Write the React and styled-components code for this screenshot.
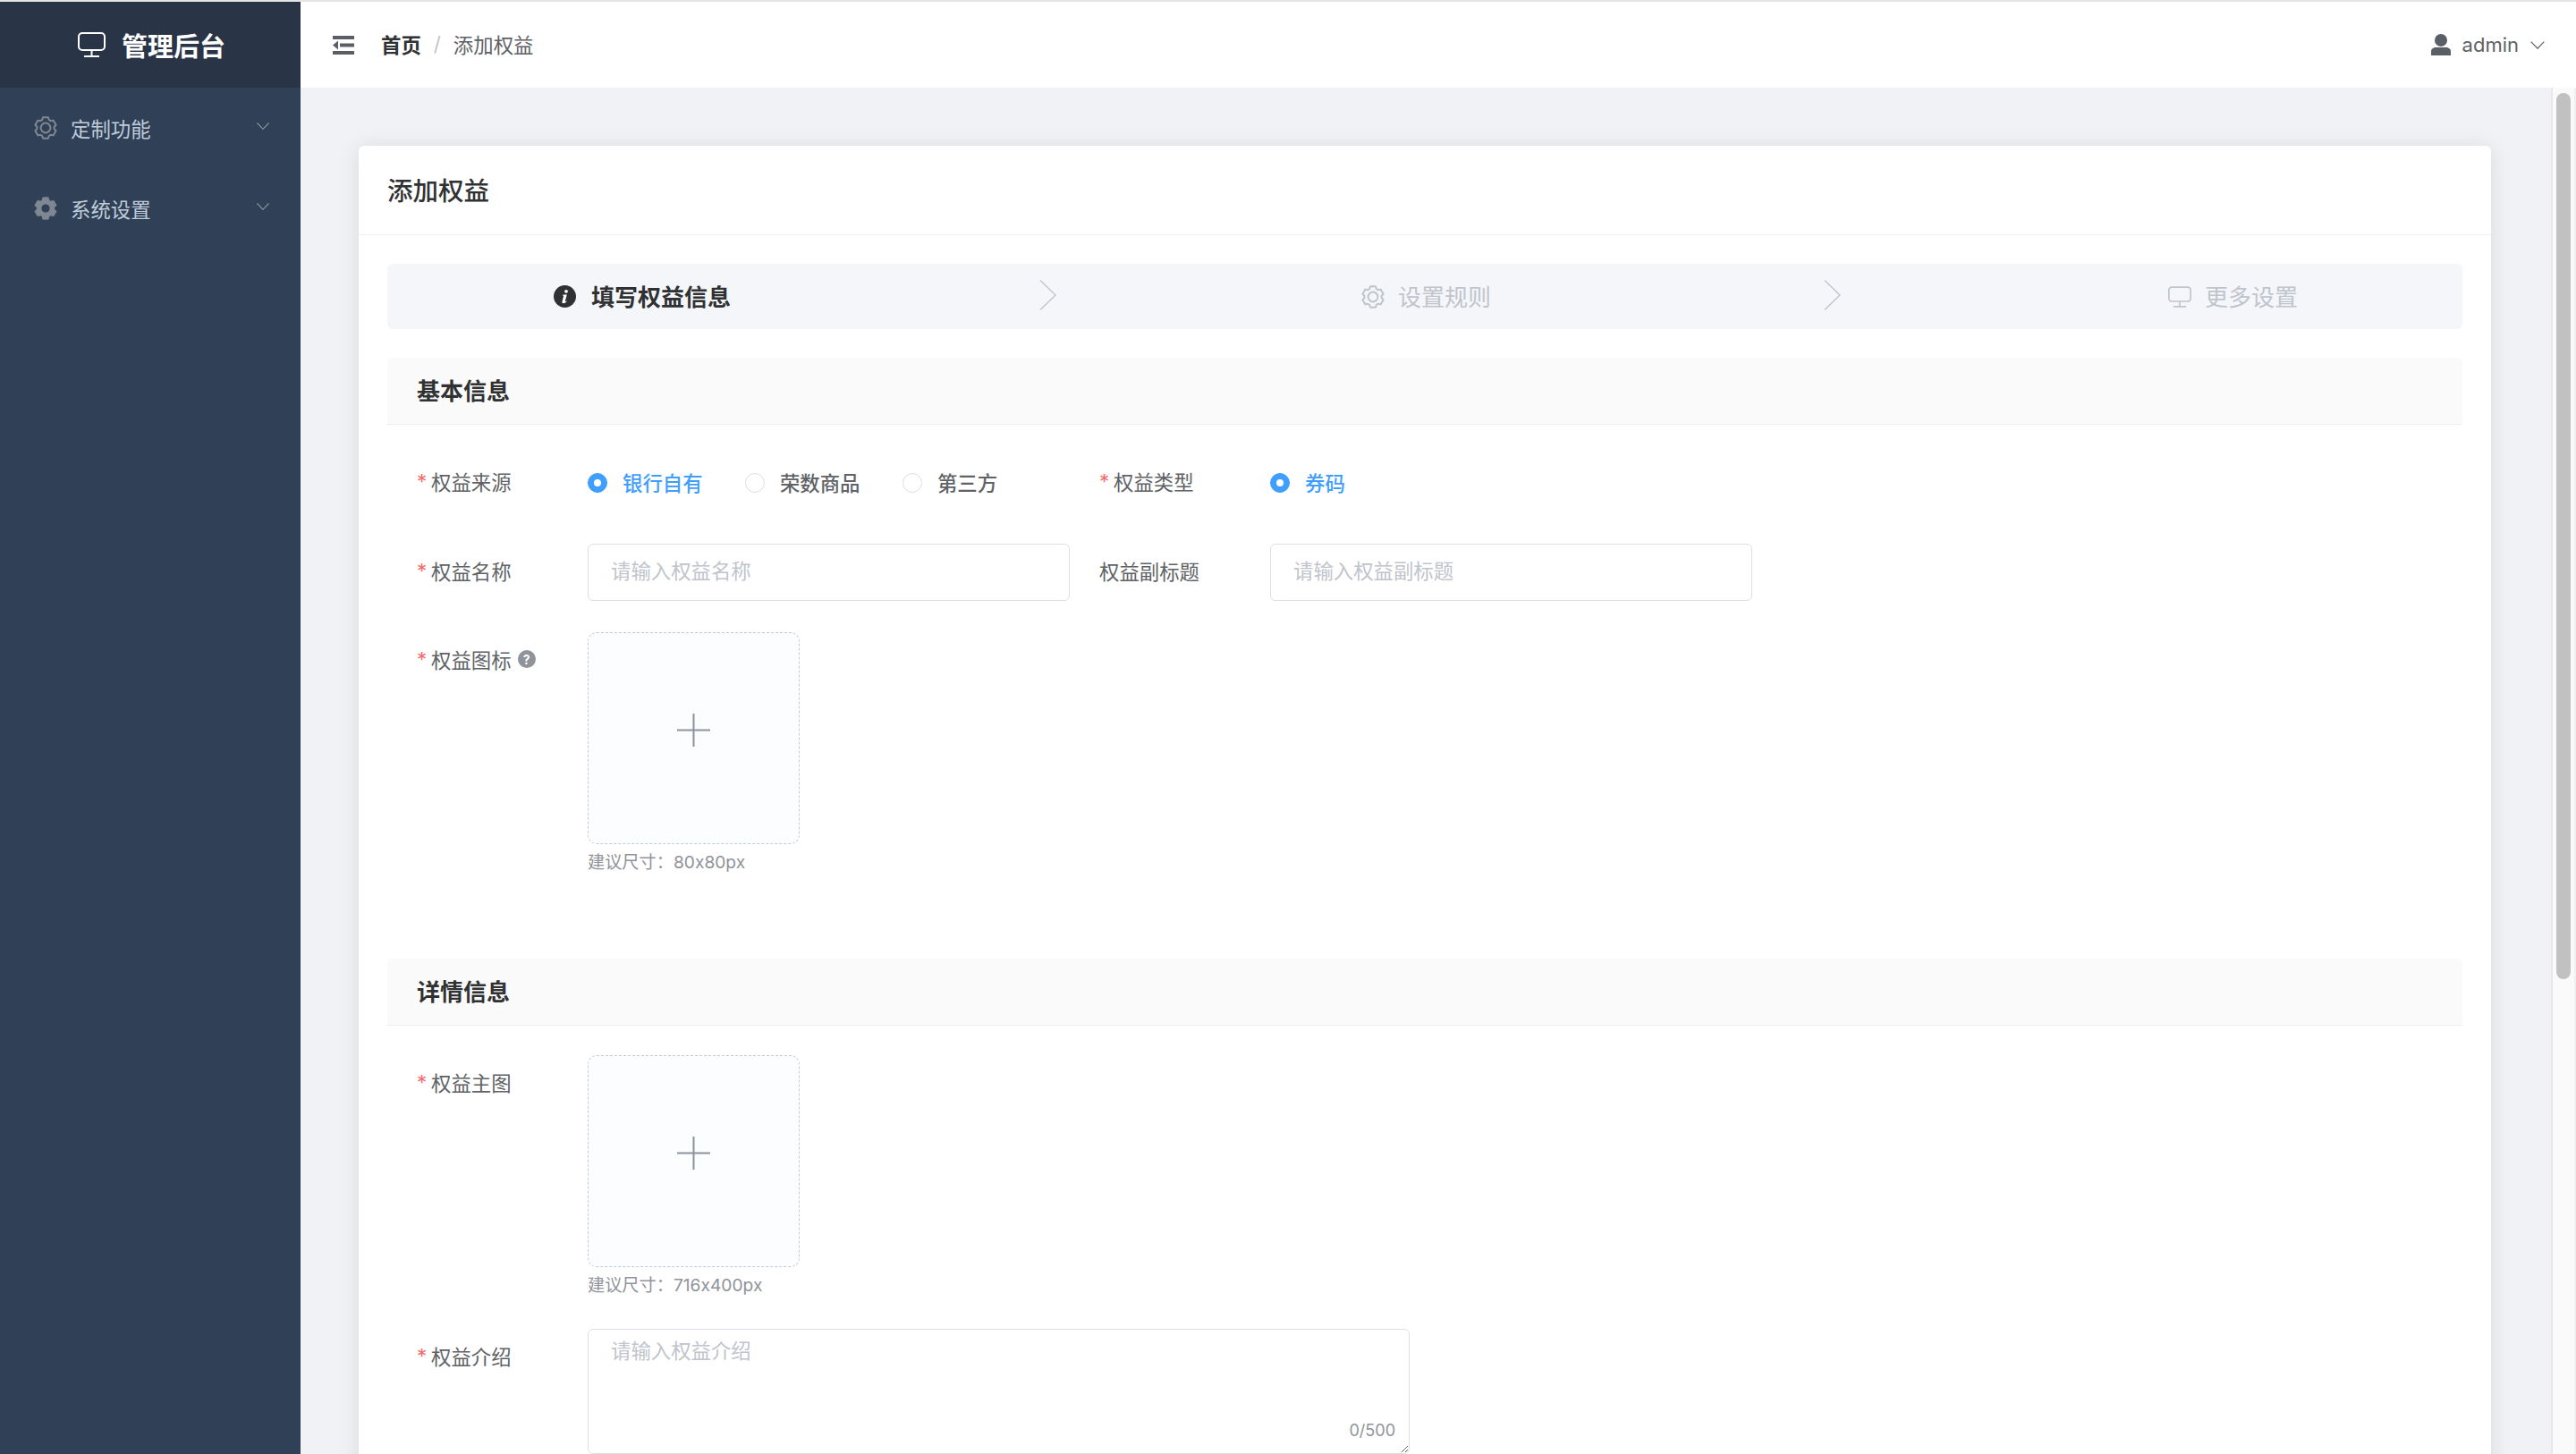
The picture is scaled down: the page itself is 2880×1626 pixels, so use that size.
import React from "react";
import styled, { createGlobalStyle } from "styled-components";

const GlobalStyle = createGlobalStyle`
  html, body {
    margin: 0;
    height: 100%;
    overflow: hidden;
    background: #fff;
  }
  * {
    box-sizing: border-box;
  }
  body, input, textarea {
    font-family: "Inter", "Noto Sans CJK SC", sans-serif;
  }
`;

const Shell = styled.div`
  display: grid;
  grid-template-columns: 336px 1fr;
  height: 1626px;
  border-top: 2px solid #e4e4e4;
`;

const Sidebar = styled.aside`
  background: #304157;
`;
const Logo = styled.div`
  display: flex;
  align-items: center;
  height: 96px;
  padding-left: 87px;
  gap: 18px;
  background: #293547;
  color: #fff;
  font-size: 29px;
  font-weight: 700;
`;
const MenuItem = styled.div`
  display: flex;
  align-items: center;
  height: 90px;
  padding: 0 35px 0 38px;
  gap: 15px;
  color: #bfcbd9;
  font-size: 22.4px;
`;
const MenuLabel = styled.span`
  flex: 1;
  padding-bottom: 1px;
`;
const MenuArrow = styled.span`
  display: flex;
  margin-bottom: 4px;
`;

const Right = styled.div`
  display: flex;
  flex-direction: column;
  min-width: 0;
  height: 1624px;
`;
const Header = styled.header`
  display: flex;
  align-items: center;
  flex: none;
  height: 96px;
  padding: 0 35px 0 36px;
  background: #fff;
`;
const Crumbs = styled.div`
  display: flex;
  align-items: center;
  flex: 1;
  margin-left: 30px;
  padding-bottom: 3px;
  font-size: 22.4px;
  color: #606266;
`;
const CrumbHome = styled.span`
  color: #303133;
  font-weight: 700;
`;
const CrumbSep = styled.span`
  margin: 0 14px;
  color: #c0c4cc;
`;
const UserBox = styled.div`
  display: flex;
  align-items: center;
  font-size: 22px;
  color: #606266;
`;
const UserName = styled.span`
  margin: 0 13px 0 13px;
`;

const Main = styled.main`
  display: flex;
  flex: 1;
  min-height: 0;
  background: #f0f2f6;
`;
const Content = styled.div`
  flex: 1;
  min-width: 0;
  overflow: hidden;
  padding: 65px 67px 0 65px;
`;
const Rail = styled.div`
  flex: none;
  width: 28px;
  padding: 6px 4px;
  background: #fafafa;
  border-left: 2px solid #e8e8e8;
  border-right: 2px solid #f0f0f0;
`;
const RailThumb = styled.div`
  height: 991px;
  background: #c1c1c1;
  border-radius: 8px;
`;

const Card = styled.section`
  background: #fff;
  border-radius: 6px;
  box-shadow: 0 2px 24px rgba(0, 0, 0, 0.1);
`;
const CardTitle = styled.div`
  display: flex;
  align-items: center;
  height: 100px;
  padding: 0 0 3px 32px;
  border-bottom: 1px solid #ebeef5;
  font-size: 28.5px;
  font-weight: 500;
  color: #303133;
`;
const CardBody = styled.div`
  padding: 32px;
`;

const Steps = styled.div`
  display: flex;
  align-items: center;
  height: 73px;
  padding-left: 186px;
  margin-bottom: 32px;
  background: #f5f6fa;
  border-radius: 6px;
`;
const Step = styled.div`
  display: flex;
  align-items: center;
  gap: ${(p) => (p.$active ? 17 : 15)}px;
  font-size: 26px;
  font-weight: ${(p) => (p.$active ? 700 : 400)};
  color: ${(p) => (p.$active ? "#303133" : "#c0c4cc")};
`;
const StepText = styled.span`
  padding-bottom: 3px;
`;
const StepArrow = styled.svg`
  flex: none;
  width: 19px;
  height: 34px;
  margin: 0 ${(p) => p.$after}px 3px ${(p) => p.$before}px;
`;

const SectionHead = styled.div`
  display: flex;
  align-items: center;
  height: 75px;
  padding: 0 0 3px 33px;
  background: #fafafa;
  border-bottom: 1px solid #ebeef5;
  border-radius: 6px 6px 0 0;
  font-size: 26px;
  font-weight: 700;
  color: #303133;
`;

const Form = styled.div`
  padding: 33px 0 0 33px;
  margin-bottom: ${(p) => p.$after || 0}px;
`;
const Row = styled.div`
  display: flex;
  gap: 33px;
  margin-bottom: ${(p) => p.$after || 0}px;
`;
const Field = styled.div`
  display: flex;
  width: ${(p) => p.$width || 730}px;
`;
const Label = styled.label`
  display: flex;
  align-items: center;
  flex: none;
  align-self: flex-start;
  width: 191px;
  height: 64px;
  padding-bottom: 4px;
  font-size: 22.4px;
  color: #606266;
`;
const Star = styled.span`
  flex: none;
  width: 16px;
  color: #f56c6c;
`;
const HelpMark = styled.span`
  display: flex;
  align-items: center;
  justify-content: center;
  width: 20px;
  height: 20px;
  margin-left: 7px;
  border-radius: 50%;
  background: #909399;
  color: #fff;
  font-size: 14px;
  font-weight: 700;
`;

const RadioGroup = styled.div`
  display: flex;
  align-items: center;
  height: 64px;
  gap: 47.4px;
`;
const RadioItem = styled.div`
  display: flex;
  align-items: center;
  gap: 17px;
  font-size: 22.4px;
  font-weight: 500;
  color: ${(p) => (p.$checked ? "#409eff" : "#606266")};
`;
const RadioText = styled.span`
  padding-bottom: 3px;
`;
const RadioDot = styled.span`
  display: flex;
  align-items: center;
  justify-content: center;
  width: 22px;
  height: 22px;
  border-radius: 50%;
  border: 1px solid ${(p) => (p.$checked ? "#409eff" : "#dcdfe6")};
  background: ${(p) => (p.$checked ? "#409eff" : "#fff")};

  &::after {
    content: "";
    display: ${(p) => (p.$checked ? "block" : "none")};
    width: 8px;
    height: 8px;
    border-radius: 50%;
    background: #fff;
  }
`;

const TextInput = styled.input`
  width: 539px;
  height: 64px;
  padding: 0 25px 3px;
  border: 1px solid #dcdfe6;
  border-radius: 6px;
  outline: none;
  font-size: 22.4px;
  color: #606266;

  &::placeholder {
    color: #c0c4cc;
  }
`;

const Upload = styled.div`
  display: flex;
  align-items: center;
  justify-content: center;
  width: 237px;
  height: 237px;
  border: 1px dashed #c0ccda;
  border-radius: 10px;
  background: #fbfdff;
`;
const Hint = styled.div`
  height: 40px;
  font-size: 19.2px;
  line-height: 40px;
  color: #909399;
`;

const TextAreaBox = styled.div`
  position: relative;
  width: 919px;
  height: 140px;
`;
const TextArea = styled.textarea`
  display: block;
  width: 100%;
  height: 100%;
  padding: 7px 25px;
  border: 1px solid #dcdfe6;
  border-radius: 6px;
  outline: none;
  font-size: 22.4px;
  line-height: 33px;
  color: #606266;

  &::placeholder {
    color: #c0c4cc;
  }
`;
const Counter = styled.span`
  position: absolute;
  right: 16px;
  bottom: 13px;
  font-size: 18px;
  line-height: 26px;
  color: #909399;
`;

// six blunt teeth, same outline for the stroked and the filled gear
function gearPath(cx, cy, outer, inner) {
  const points = [];
  for (let i = 0; i < 6; i++) {
    const a = (Math.PI / 3) * i - Math.PI / 2;
    [
      [-0.42, inner],
      [-0.25, outer],
      [0.25, outer],
      [0.42, inner],
    ].forEach(([da, r]) => {
      points.push(
        `${(cx + r * Math.cos(a + da)).toFixed(2)} ${(cy + r * Math.sin(a + da)).toFixed(2)}`
      );
    });
  }
  return `M${points.join("L")}Z`;
}

function GearOutline({ size = 26, color = "#7f8793" }) {
  return (
    <svg width={size} height={size} viewBox="0 0 26 26" fill="none" stroke={color} strokeWidth="2" strokeLinejoin="round" style={{ flex: "none" }}>
      <path d={gearPath(13, 13, 12, 9.6)} />
      <circle cx="13" cy="13" r="5.4" />
    </svg>
  );
}

function GearSolid() {
  return (
    <svg width="26" height="26" viewBox="0 0 26 26" style={{ flex: "none" }}>
      <path fillRule="evenodd" fill="#7f8793" stroke="#7f8793" strokeWidth="0.8" strokeLinejoin="round" d={`${gearPath(13, 13, 12.6, 9.8)}M13 8a5 5 0 1 0 0 10a5 5 0 1 0 0-10Z`} />
    </svg>
  );
}

function Monitor({ width = 31, height = 28, color = "#fff" }) {
  return (
    <svg width={width} height={height} viewBox="0 0 31 28" fill="none" stroke={color} strokeWidth="2" style={{ flex: "none" }}>
      <rect x="1" y="1" width="29" height="19" rx="4" />
      <path d="M15.5 20v6M7 27h17" />
    </svg>
  );
}

function Chevron({ width = 14, height = 8, color = "#8b95a3" }) {
  return (
    <svg width={width} height={height} viewBox="0 0 14 8" fill="none" stroke={color} strokeWidth="1.1" style={{ flex: "none" }}>
      <path d="M.5.5 7 7.3 13.5.5" />
    </svg>
  );
}

function Hamburger() {
  return (
    <svg width="24" height="21" viewBox="0 0 24 21" fill="#5a5e66" style={{ flex: "none" }}>
      <rect width="24" height="4" />
      <rect x="8" y="8.5" width="16" height="4" />
      <path d="M0 10.5 6 5.5v10Z" />
      <rect y="17" width="24" height="4" />
    </svg>
  );
}

function InfoIcon() {
  return (
    <svg width="25" height="25" viewBox="0 0 25 25" style={{ flex: "none" }}>
      <circle cx="12.5" cy="12.5" r="12.5" fill="#303133" />
      <circle cx="14" cy="6.8" r="1.9" fill="#fff" />
      <path d="M10.6 10.6h4.2l-2 7.2c-.1.5.4.6 1.6-.3l.3.5c-1.3 1.6-2.6 2.2-3.9 2.2-1.2 0-1.6-.7-1.3-1.9l1.5-5.8c.1-.6-.2-.8-1-.9Z" fill="#fff" />
    </svg>
  );
}

function UserIcon() {
  return (
    <svg width="22" height="24" viewBox="0 0 22 24" fill="#5a5e66" style={{ flex: "none" }}>
      <circle cx="11" cy="7" r="7" />
      <path d="M0 24v-4.5C0 16.5 2.5 15 5.5 15h11c3 0 5.5 1.5 5.5 4.5V24Z" />
    </svg>
  );
}

function PlusIcon() {
  return (
    <svg width="37" height="37" viewBox="0 0 37 37" stroke="#8c939d" strokeWidth="2" style={{ marginBottom: 19 }}>
      <path d="M18.5 0v37M0 18.5h37" />
    </svg>
  );
}

function StepChevron({ before, after }) {
  return (
    <StepArrow $before={before} $after={after} viewBox="0 0 19 34" fill="none" stroke="#c0c4cc" strokeWidth="1.4">
      <path d="M1 .5 18 17 1 33.5" />
    </StepArrow>
  );
}

function Required({ children }) {
  return (
    <Label>
      <Star>*</Star>
      {children}
    </Label>
  );
}

function Radio({ checked, children }) {
  return (
    <RadioItem $checked={checked}>
      <RadioDot $checked={checked} />
      <RadioText>{children}</RadioText>
    </RadioItem>
  );
}

export default function App() {
  return (
    <>
      <GlobalStyle />
      <Shell>
        <Sidebar>
          <Logo>
            <Monitor />
            管理后台
          </Logo>
          <nav>
            <MenuItem>
              <GearOutline />
              <MenuLabel>定制功能</MenuLabel>
              <MenuArrow>
                <Chevron />
              </MenuArrow>
            </MenuItem>
            <MenuItem>
              <GearSolid />
              <MenuLabel>系统设置</MenuLabel>
              <MenuArrow>
                <Chevron />
              </MenuArrow>
            </MenuItem>
          </nav>
        </Sidebar>
        <Right>
          <Header>
            <Hamburger />
            <Crumbs>
              <CrumbHome>首页</CrumbHome>
              <CrumbSep>/</CrumbSep>
              添加权益
            </Crumbs>
            <UserBox>
              <UserIcon />
              <UserName>admin</UserName>
              <Chevron width={16} height={9} color="#606266" />
            </UserBox>
          </Header>
          <Main>
            <Content>
              <Card>
                <CardTitle>添加权益</CardTitle>
                <CardBody>
                  <Steps>
                    <Step $active>
                      <InfoIcon />
                      <StepText>填写权益信息</StepText>
                    </Step>
                    <StepChevron before={345} after={341} />
                    <Step>
                      <GearOutline color="#c0c4cc" />
                      <StepText>设置规则</StepText>
                    </Step>
                    <StepChevron before={372} after={366} />
                    <Step>
                      <Monitor width={26} height={24} color="#c0c4cc" />
                      <StepText>更多设置</StepText>
                    </Step>
                  </Steps>

                  <SectionHead>基本信息</SectionHead>
                  <Form $after={88}>
                    <Row $after={36}>
                      <Field>
                        <Required>权益来源</Required>
                        <RadioGroup>
                          <Radio checked>银行自有</Radio>
                          <Radio>荣数商品</Radio>
                          <Radio>第三方</Radio>
                        </RadioGroup>
                      </Field>
                      <Field>
                        <Required>权益类型</Required>
                        <RadioGroup>
                          <Radio checked>券码</Radio>
                        </RadioGroup>
                      </Field>
                    </Row>
                    <Row $after={35}>
                      <Field>
                        <Required>权益名称</Required>
                        <TextInput placeholder="请输入权益名称" />
                      </Field>
                      <Field>
                        <Label>权益副标题</Label>
                        <TextInput placeholder="请输入权益副标题" />
                      </Field>
                    </Row>
                    <Row>
                      <Field>
                        <Required>
                          权益图标
                          <HelpMark>?</HelpMark>
                        </Required>
                        <div>
                          <Upload>
                            <PlusIcon />
                          </Upload>
                          <Hint>建议尺寸：80x80px</Hint>
                        </div>
                      </Field>
                    </Row>
                  </Form>

                  <SectionHead>详情信息</SectionHead>
                  <Form>
                    <Row $after={29}>
                      <Field>
                        <Required>权益主图</Required>
                        <div>
                          <Upload>
                            <PlusIcon />
                          </Upload>
                          <Hint>建议尺寸：716x400px</Hint>
                        </div>
                      </Field>
                    </Row>
                    <Row>
                      <Field $width={1110}>
                        <Required>权益介绍</Required>
                        <TextAreaBox>
                          <TextArea placeholder="请输入权益介绍" />
                          <Counter>0/500</Counter>
                        </TextAreaBox>
                      </Field>
                    </Row>
                  </Form>
                </CardBody>
              </Card>
            </Content>
            <Rail>
              <RailThumb />
            </Rail>
          </Main>
        </Right>
      </Shell>
    </>
  );
}
